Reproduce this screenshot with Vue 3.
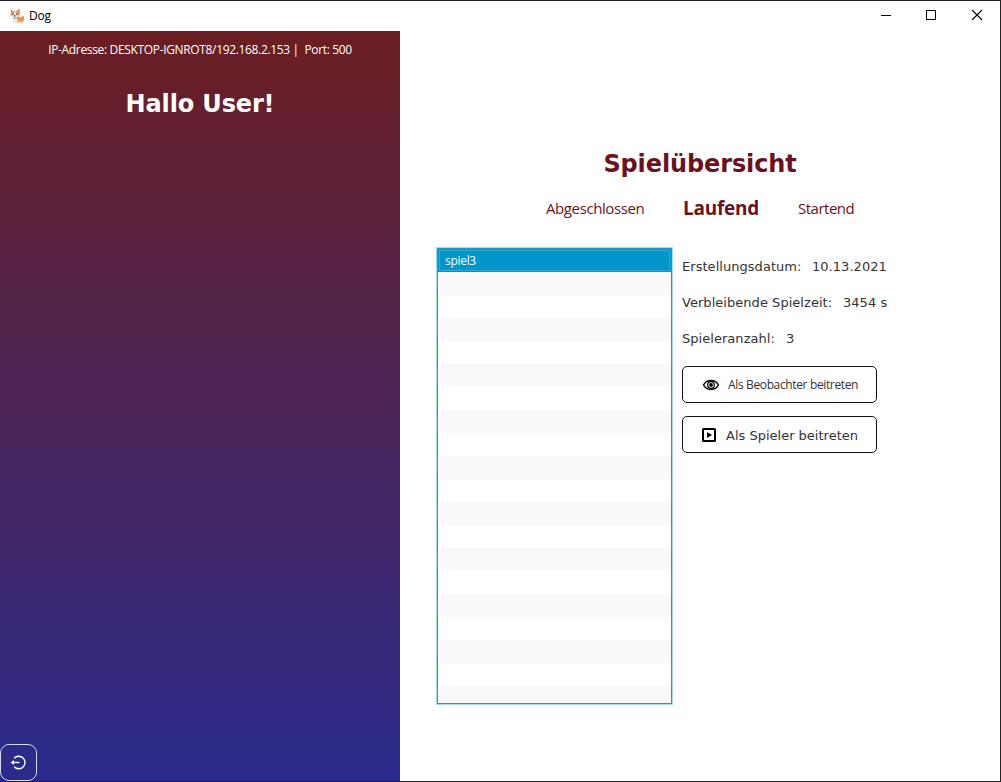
<script setup>
const tabs = [
  { label: 'Abgeschlossen', cls: 'done' },
  { label: 'Laufend', cls: 'running' },
  { label: 'Startend', cls: 'starting' },
]
const rows = Array.from({ length: 20 }, (_, i) => (i === 0 ? 'spiel3' : ''))
</script>

<template>
  <div class="window">
    <header class="titlebar">
      <svg class="logo" width="16" height="16" viewBox="0 0 16 16">
        <path d="M1.4 .8 L4.3 3.2 L7.2 3.2 L10.4 .2 L11 5.5 L9.4 8.5 L11 9.6 L13 9 L13.6 7.4 L15 8.4 L14.8 12 L13.8 14.6 L4.6 14.6 L4 10 L2 7.5 Z" fill="#ee8f48" />
        <path d="M2 2 L4 4 L2.8 5.6 Z M9.8 1.8 L10 5.2 L8 4 Z" fill="#c99a9c" />
        <path d="M5.2 4 H6.8 L7.1 6.2 L9.3 7.3 L8.3 9.6 L8.8 13 L7.6 15 H4.6 L4 10 L2.3 8 L4.6 6.4 Z" fill="#f4e9e2" />
        <path d="M9 13.6 H14.4 V15.2 H9Z" fill="#f0dfd6" />
        <circle cx="4" cy="6.4" r=".6" fill="#4b3340" />
        <circle cx="8" cy="6.4" r=".6" fill="#4b3340" />
        <circle cx="5.7" cy="7.9" r=".8" fill="#4b3340" />
        <path d="M4.4 10.2 H8.4" stroke="#6f93a8" stroke-width=".9" />
      </svg>
      <span class="app-name">Dog</span>
      <svg class="controls" width="106" height="12" viewBox="0 0 106 12" fill="none" stroke="#000" shape-rendering="crispEdges">
        <path d="M1 6.5 H11" />
        <rect x="46.5" y="1.5" width="9" height="9" />
        <path d="M92 1 L102 11 M102 1 L92 11" shape-rendering="auto" stroke-width="1.1" />
      </svg>
    </header>
    <div class="body">
      <aside class="sidebar">
        <p class="address">IP-Adresse: DESKTOP-IGNROT8/192.168.2.153 |&nbsp; Port: 500</p>
        <h1 class="hello">Hallo User!</h1>
        <button class="logout">
          <svg width="18" height="18" viewBox="0 0 18 18" fill="none" stroke="#fff" stroke-width="1.4">
            <path d="M4.2 4.3 A6.2 6.2 0 1 1 4.2 12.7" />
            <path d="M9.5 8.5 H2" />
            <path d="M4 6.1 L.6 8.5 L4 10.9 Z" fill="#fff" stroke="none" />
          </svg>
        </button>
      </aside>
      <main class="main">
        <h2 class="title">Spielübersicht</h2>
        <nav class="tabs">
          <span v-for="t in tabs" :key="t.label" :class="t.cls">{{ t.label }}</span>
        </nav>
        <section class="content">
          <ul class="list">
            <li v-for="(r, i) in rows" :key="i" :class="{ selected: i === 0 }">{{ r }}</li>
          </ul>
          <div class="details">
            <div class="info"><span class="k1">Erstellungsdatum:</span><span>10.13.2021</span></div>
            <div class="info"><span class="k2">Verbleibende Spielzeit:</span><span>3454 s</span></div>
            <div class="info"><span class="k3">Spieleranzahl:</span><span>3</span></div>
            <button class="join watch">
              <svg width="18" height="12" viewBox="0 0 18 12" fill="none" stroke="#000">
                <path d="M1.5 6 C4.7 0 13.3 0 16.5 6 C13.3 12 4.7 12 1.5 6 Z" stroke-width="1.4" />
                <circle cx="9" cy="6" r="3.3" stroke-width="1.2" />
                <circle cx="9" cy="6" r="1.9" fill="#000" stroke="none" />
              </svg>
              <span>Als Beobachter beitreten</span>
            </button>
            <button class="join play">
              <svg width="14" height="14" viewBox="0 0 14 14">
                <rect x="1" y="1" width="12" height="12" rx=".5" fill="none" stroke="#000" stroke-width="2" />
                <path d="M5 4 L10 7 L5 10 Z" />
              </svg>
              <span>Als Spieler beitreten</span>
            </button>
          </div>
        </section>
      </main>
    </div>
  </div>
</template>

<style>
body { margin: 0; background: #fff; overflow: hidden; }
</style>

<style scoped>
* { box-sizing: border-box; }
h1, h2, p, ul { margin: 0; padding: 0; }
.window {
  width: 1001px; height: 782px; display: flex; flex-direction: column;
  border: solid #222; border-width: 1px 1px 1px 0; background: #fff;
  font-family: "Open Sans", "Noto Sans", sans-serif; font-size: 12px; white-space: nowrap;
}
.titlebar { height: 30px; flex: none; display: flex; align-items: center; padding: 0 17px 0 9px; }
.logo { margin-right: 4px; }
.app-name { color: #000; letter-spacing: -0.2px; margin-top: -1px; }
.controls { margin-left: auto; margin-right: -3px; margin-top: -2px; }
.body { flex: 1; display: flex; min-height: 0; }
.sidebar {
  width: 400px; display: flex; flex-direction: column; align-items: center;
  background: linear-gradient(#6b1e22, #2a2a8c); color: #fff;
}
.address { margin-top: 10px; line-height: 18px; letter-spacing: -0.34px; }
.hello {
  margin-top: 29px; letter-spacing: -0.15px;
  font: bold 24px/32px "DejaVu Sans", sans-serif;
}
.logout {
  margin-top: auto; align-self: flex-start; width: 37px; height: 37px; padding: 0;
  display: flex; align-items: center; justify-content: center;
  border: 1px solid #d8d8ea; border-radius: 9px; background: transparent;
}
.main { flex: 1; display: flex; flex-direction: column; color: #6b1220; }
.title {
  margin-top: 117px; text-align: center; letter-spacing: -0.12px;
  font: bold 24px/32px "DejaVu Sans", sans-serif;
}
.tabs { display: flex; align-items: center; height: 28px; margin-top: 14px; padding-left: 146px; }
.done { width: 137px; font-size: 15px; letter-spacing: -0.4px; }
.running { width: 115px; font-size: 19px; font-weight: bold; letter-spacing: -0.25px; }
.starting { font-size: 15px; letter-spacing: -0.5px; }
.content { display: flex; margin: 26px 0 0 37px; }
.list {
  width: 235px; height: 456px; list-style: none; overflow: hidden;
  border: 1px solid #1a9cc4; box-shadow: 0 0 0 1px #a5dcec;
}
.list li { height: 23px; line-height: 23px; padding-left: 7px; }
.list li:nth-child(even) { background: #f9f9f9; }
.list .selected {
  background: #0096c9; color: #fff; letter-spacing: -0.3px;
  outline: 1px solid #33abd4; outline-offset: -2px;
}
.details { margin-left: 10px; padding-top: 1px; color: #333; }
.info { height: 36px; line-height: 36px; font-family: "DejaVu Sans", sans-serif; font-size: 13px; letter-spacing: 0.04px; display: flex; }
.k1 { width: 130px; }
.k2 { width: 161px; }
.k3 { width: 104px; }
.join {
  display: flex; align-items: center; width: 195px; height: 37px; padding: 0;
  border: 1px solid #111; border-radius: 5px; background: #fff; color: #333;
}
.watch { margin-top: 9px; padding-left: 19px; gap: 8px; font: 12px "Open Sans", sans-serif; letter-spacing: -0.36px; }
.play { margin-top: 13px; padding-left: 19px; gap: 10px; font: 13px "DejaVu Sans", sans-serif; }
.play span { padding-top: 2px; }
</style>
